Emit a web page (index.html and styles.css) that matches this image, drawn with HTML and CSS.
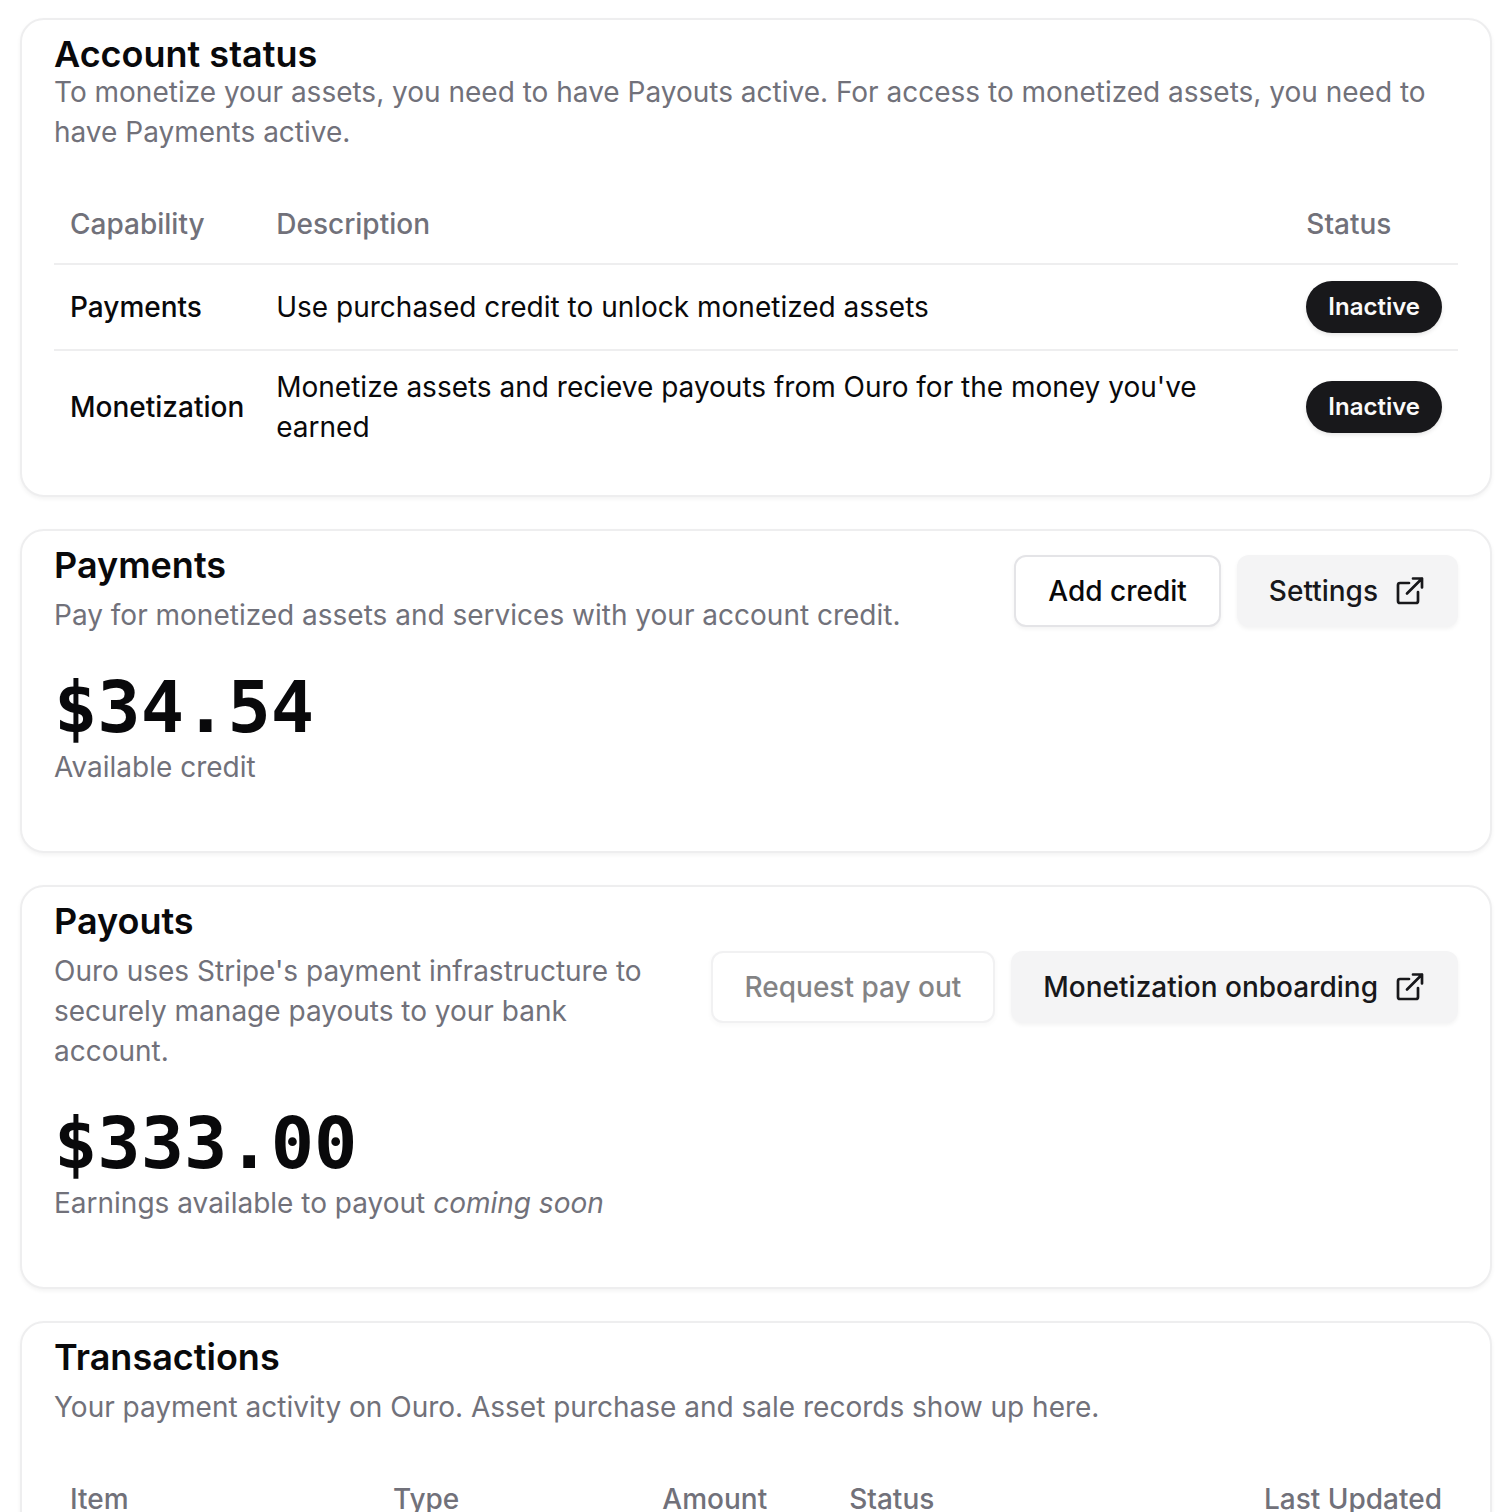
FILE: index.html
```html
<!DOCTYPE html>
<html lang="en">
<head>
    <meta charset="UTF-8">
    <meta name="viewport" content="width=device-width, initial-scale=1.0">
    <title>Billing</title>
    <link rel="stylesheet" href="styles.css">
</head>
<body>

<main class="page">

    <!-- Account status -->
    <section class="card">
        <div class="card-header tight">
            <h2 class="card-title">Account status</h2>
            <p class="muted">To monetize your assets, you need to have Payouts active. For access to monetized assets, you need to have Payments active.</p>
        </div>
        <div class="card-table">
            <table class="status-table">
                <thead>
                    <tr>
                        <th>Capability</th>
                        <th class="wide">Description</th>
                        <th>Status</th>
                    </tr>
                </thead>
                <tbody>
                    <tr>
                        <td class="name">Payments</td>
                        <td>Use purchased credit to unlock monetized assets</td>
                        <td><span class="badge">Inactive</span></td>
                    </tr>
                    <tr>
                        <td class="name">Monetization</td>
                        <td>Monetize assets and recieve payouts from Ouro for the money you've earned</td>
                        <td><span class="badge">Inactive</span></td>
                    </tr>
                </tbody>
            </table>
        </div>
    </section>

    <!-- Payments -->
    <section class="card">
        <div class="card-header split">
            <div class="heading">
                <h2 class="card-title">Payments</h2>
                <p class="muted">Pay for monetized assets and services with your account credit.</p>
            </div>
            <div class="actions">
                <button type="button" class="btn outline">Add credit</button>
                <a href="#settings" class="btn secondary">
                    Settings
                    <svg class="icon" viewBox="0 0 32 32" aria-hidden="true">
                        <path d="M15 8H6a2 2 0 0 0-2 2v16a2 2 0 0 0 2 2h16a2 2 0 0 0 2-2v-9"/>
                        <path d="M13 18.5L28 3.5M19 3.5h9v9"/>
                    </svg>
                </a>
            </div>
        </div>
        <div class="balance">
            <p class="amount">$34.54</p>
            <p class="muted">Available credit</p>
        </div>
    </section>

    <!-- Payouts -->
    <section class="card">
        <div class="card-header split">
            <div class="heading">
                <h2 class="card-title">Payouts</h2>
                <p class="muted">Ouro uses Stripe's payment infrastructure to securely manage payouts to your bank account.</p>
            </div>
            <div class="actions">
                <button type="button" class="btn outline" disabled>Request pay out</button>
                <a href="#onboarding" class="btn secondary">
                    Monetization onboarding
                    <svg class="icon" viewBox="0 0 32 32" aria-hidden="true">
                        <path d="M15 8H6a2 2 0 0 0-2 2v16a2 2 0 0 0 2 2h16a2 2 0 0 0 2-2v-9"/>
                        <path d="M13 18.5L28 3.5M19 3.5h9v9"/>
                    </svg>
                </a>
            </div>
        </div>
        <div class="balance">
            <p class="amount">$333.00</p>
            <p class="muted">Earnings available to payout <em>coming soon</em></p>
        </div>
    </section>

    <!-- Transactions -->
    <section class="card">
        <div class="card-header">
            <h2 class="card-title">Transactions</h2>
            <p class="muted">Your payment activity on Ouro. Asset purchase and sale records show up here.</p>
        </div>
        <div class="card-table">
            <table class="transactions-table">
                <thead>
                    <tr>
                        <th class="col-item">Item</th>
                        <th class="col-type">Type</th>
                        <th class="col-amount">Amount</th>
                        <th>Status</th>
                        <th class="col-updated">Last Updated</th>
                    </tr>
                </thead>
            </table>
        </div>
    </section>

</main>

</body>
</html>
```
FILE: styles.css
```css
* {
    box-sizing: border-box;
}

body {
    margin: 0;
    font-family: Inter, "Liberation Sans", sans-serif;
    font-optical-sizing: none;
    font-size: 28px;
    line-height: 40px;
    color: #09090b;
    background-color: #fff;
}

h2,
p {
    margin: 0;
}

.page {
    display: flex;
    flex-direction: column;
    gap: 32px;
    padding: 18px 20px;
}

/* Cards */
.card {
    border: 2px solid #eeeeef;
    border-radius: 24px;
    background-color: #fff;
    box-shadow: 0 2px 4px rgba(0, 0, 0, 0.05);
}

.card-header {
    display: flex;
    flex-direction: column;
    gap: 12px;
    padding: 16px 32px;
}

.card-header.tight {
    gap: 0;
}

.card-header.split {
    flex-direction: row;
    align-items: center;
    justify-content: space-between;
    gap: 48px;
}

.heading {
    display: flex;
    flex-direction: column;
    gap: 12px;
}

.card-title {
    font-size: 36px;
    line-height: 36px;
    font-weight: 600;
    font-optical-sizing: auto;
}

.muted {
    color: #71717a;
}

.card-table {
    padding: 16px 32px 32px;
}

/* Tables */
table {
    width: 100%;
    border-collapse: separate;
    border-spacing: 0;
}

th {
    height: 81px;
    padding: 0 16px;
    font-weight: 500;
    text-align: left;
    white-space: nowrap;
    color: #71717a;
    border-bottom: 2px solid #eeeeef;
}

td {
    padding: 16px;
    border-bottom: 2px solid #eeeeef;
}

tbody tr:last-child td {
    border-bottom: none;
}

.wide {
    width: 100%;
}

.name {
    font-weight: 500;
}

.transactions-table {
    table-layout: fixed;
}

.col-item {
    width: 23%;
}

.col-type {
    width: 18%;
}

.col-amount {
    width: 14.5%;
    padding-right: 66px;
    text-align: right;
}

.col-updated {
    text-align: right;
}

.badge {
    display: flex;
    padding: 10px 22px;
    border-radius: 26px;
    font-size: 24px;
    line-height: 32px;
    font-weight: 600;
    color: #fafafa;
    background-color: #18181b;
    box-shadow: 0 2px 4px rgba(0, 0, 0, 0.1);
}

/* Buttons */
.actions {
    display: flex;
    flex-shrink: 0;
    gap: 16px;
}

.btn {
    display: flex;
    align-items: center;
    gap: 16px;
    height: 72px;
    padding: 0 32px;
    border: none;
    border-radius: 12px;
    font: inherit;
    font-weight: 500;
    white-space: nowrap;
    text-decoration: none;
    cursor: pointer;
    box-shadow: 0 2px 4px rgba(0, 0, 0, 0.05);
}

.btn.outline {
    border: 2px solid #e4e4e7;
    color: #09090b;
    background-color: #fff;
}

.btn.secondary {
    color: #18181b;
    background-color: #f4f4f5;
}

.btn:disabled {
    opacity: 0.5;
    cursor: default;
}

.icon {
    width: 32px;
    height: 32px;
    fill: none;
    stroke: currentColor;
    stroke-width: 2.7;
    stroke-linecap: round;
    stroke-linejoin: round;
}

/* Balances */
.balance {
    padding: 16px 32px 64px;
}

.amount {
    font-family: "DejaVu Sans Mono", monospace;
    font-size: 72px;
    line-height: 80px;
    font-weight: 700;
    font-variant-numeric: slashed-zero;
}
```
